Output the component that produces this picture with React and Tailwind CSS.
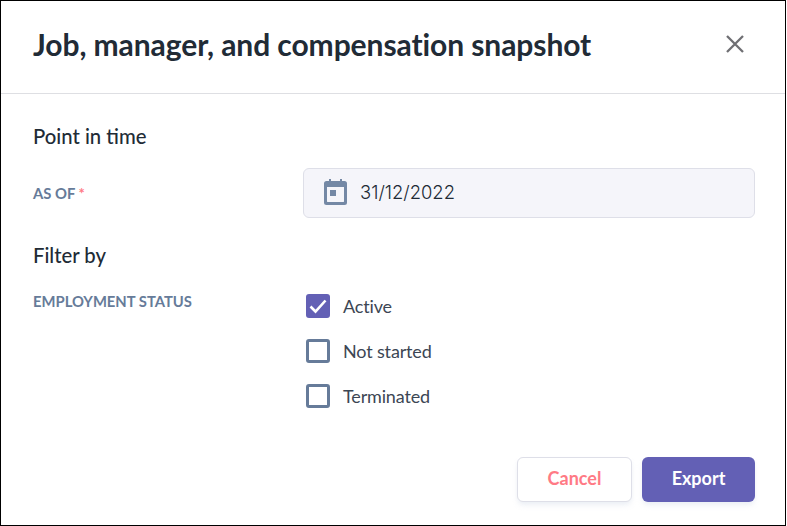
const statuses = [
  { label: 'Active', checked: true },
  { label: 'Not started', checked: false },
  { label: 'Terminated', checked: false },
];

function CalendarIcon() {
  return (
    <svg width="23" height="26" viewBox="0 0 23 26" className="mb-[2px] shrink-0">
      <path
        fill="#7488a5"
        d="M5 0h2v2h9V0h2v2h2.500A2.500 2.500 0 0 1 23 4.500v19a2.500 2.500 0 0 1-2.500 2.500h-18A2.500 2.500 0 0 1 0 23.500v-19A2.500 2.500 0 0 1 2.500 2H5V0Zm-2 8v14.500c0 .3.200.500.500.500h16c.3 0 .500-.200.500-.500V8H3Zm3 3h6v6H6v-6Z"
        fillRule="evenodd"
      />
    </svg>
  );
}

function Checkbox({ checked }) {
  if (checked) {
    return (
      <span className="flex h-6 w-6 items-center justify-center rounded-[3px] bg-[#6360b5]">
        <svg width="20" height="20" viewBox="0 0 20 20" fill="none">
          <path d="M2.500 10.500l5 5 10-11" stroke="#fff" strokeWidth="2.600" />
        </svg>
      </span>
    );
  }
  return <span className="h-6 w-6 rounded-[3px] border-[3px] border-[#667b99] bg-white" />;
}

export default function App() {
  return (
    <div className="flex h-[526px] w-[786px] flex-col border border-black bg-white font-['Lato',sans-serif] text-[#212b36]">
      <header className="flex h-[93px] shrink-0 items-center justify-between border-b border-[#dedfe3] pb-[7px] pl-8 pr-[40px]">
        <h1 className="text-[30px] font-bold leading-none tracking-[-0.08px]">Job, manager, and compensation snapshot</h1>
        <svg width="20" height="20" viewBox="0 0 20 20" fill="none">
          <path d="M2 2l16 16M18 2L2 18" stroke="#6f6f73" strokeWidth="2.300" />
        </svg>
      </header>

      <main className="flex flex-1 flex-col pl-8 pr-[30px]">
        <h2 className="mt-[30px] text-[20.300px] font-medium leading-6">Point in time</h2>

        <div className="mt-[20px] grid grid-cols-[270px_1fr] items-center">
          <label className="text-[14.800px] font-bold text-[#667b99]">
            AS OF <span className="text-[#ff7a85]">*</span>
          </label>
          <div className="flex h-[50px] items-center gap-[13px] rounded-md border border-[#dedfe8] bg-[#f5f5fa] pl-5">
            <CalendarIcon />
            <span className="font-['Inter',sans-serif] text-[18.400px] font-light">31/12/2022</span>
          </div>
        </div>

        <h2 className="mt-[25px] text-[20.300px] font-medium leading-6">Filter by</h2>

        <div className="mt-[22px] grid grid-cols-[270px_1fr]">
          <span className="pt-[1px] text-[14.800px] font-bold leading-[22px] text-[#667b99]">EMPLOYMENT STATUS</span>
          <div className="flex flex-col gap-[21px] pl-[3px] pt-[5px]">
            {statuses.map((s) => (
              <label key={s.label} className="flex h-6 items-center gap-[13px] text-[18px] tracking-[-0.15px] text-[#3c4654]">
                <Checkbox checked={s.checked} />
                {s.label}
              </label>
            ))}
          </div>
        </div>

        <div className="mt-auto mb-[23px] flex justify-end gap-[10px]">
          <button className="h-[45px] w-[115px] rounded-md border border-[#dedfe8] bg-white pb-[3px] text-lg font-bold text-[#ff7a85] shadow-md shadow-slate-200/60">
            Cancel
          </button>
          <button className="h-[45px] w-[113px] rounded-md bg-[#6360b5] pb-[3px] text-lg font-bold text-white shadow-md shadow-slate-200/60">
            Export
          </button>
        </div>
      </main>
    </div>
  );
}
